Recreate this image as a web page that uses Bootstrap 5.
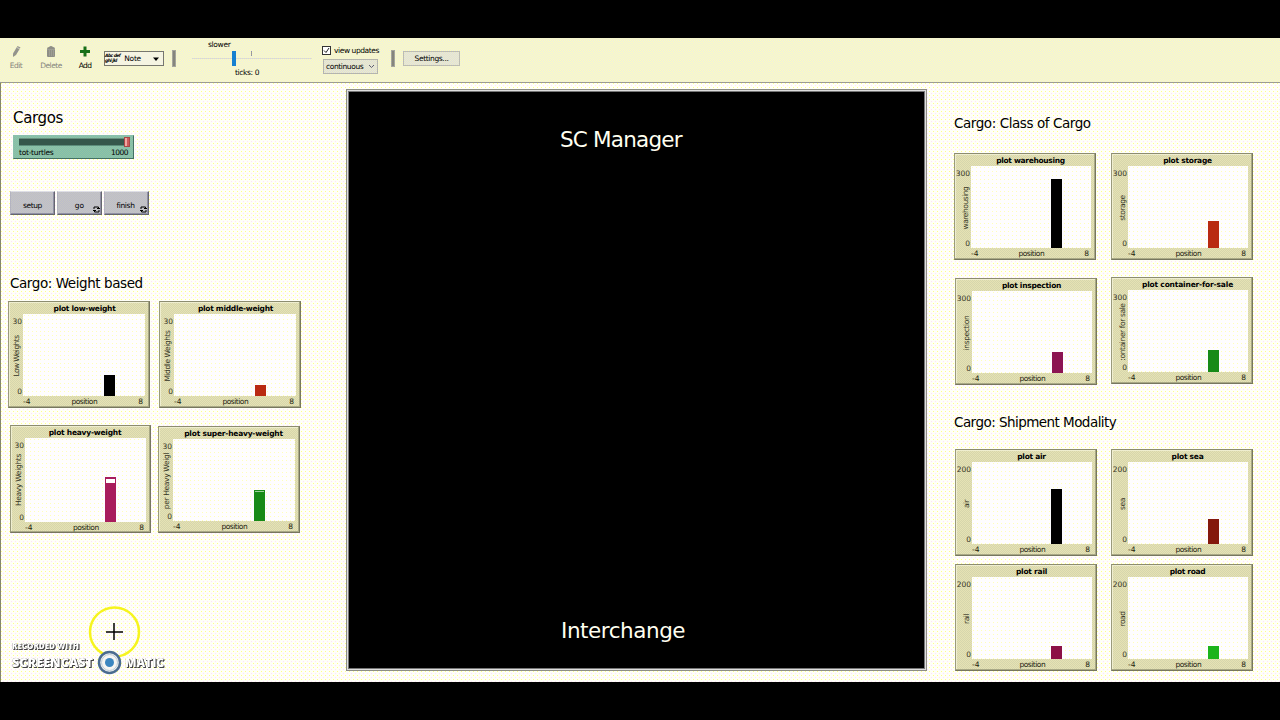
<!DOCTYPE html>
<html lang="en">
<head>
<meta charset="utf-8">
<meta name="viewport" content="width=device-width, initial-scale=1">
<title>Cargo model</title>
<link href="https://cdn.jsdelivr.net/npm/bootstrap@5.3.0/dist/css/bootstrap.min.css" rel="stylesheet">
<style>
body{width:1280px;height:720px;overflow:hidden;background:#000;font-family:"DejaVu Sans",sans-serif;color:#000;font-size:7.5px;line-height:10px}
.fit{white-space:pre;display:inline-block}
.app{height:644px;margin-top:38px;background:#fefdfe}
/* two-tone dither: --a base, --b second tone */
.dith,.plot,.nbtn,.slider,.bar-top{background:
 conic-gradient(at 1px 1px,transparent 75%,var(--b) 0) 0 0/2px 2px,
 conic-gradient(at 1px 1px,transparent 75%,var(--b) 0) 1px 1px/2px 2px,var(--a)}
/* toolbar */
.bar-top{height:45px;border-bottom:1px solid #9b9b94;--a:#ebebe4;--b:#ffffba}
.tool{text-align:center;height:30px;margin-top:7px}
.tool svg{display:block;margin:0 auto 3px}
.muted{color:#85857c}
.note{width:60px;height:15px;margin-top:13px;border:1px solid #77776e;background:#f5f4e2}
.tiny{font-size:4.5px;line-height:4.5px;font-weight:bold;font-style:italic}
.sep{width:4px;height:17px;margin-top:12px;background:#85857d;border:1px solid #a5a59c}
.speed{width:120px;height:45px;position:relative}
.speed i{position:absolute}
.cb{width:9px;height:9px;border:1px solid #333;background:#fff}
.combo{width:55px;height:15px;border:1px solid #b5b5ad;--a:#dcdcdc;--b:#eeeec8}
.setbtn{width:57px;height:15px;margin-top:13px;border:1px solid #bcbcb2;--a:#dedede;--b:#eeeec8}
/* canvas */
.work{height:599px;border-left:1px solid #85856f;background:
 conic-gradient(at 1px 1px,transparent 75%,#ffff88 0) 0 0/4px 4px,
 conic-gradient(at 1px 1px,transparent 75%,#ffe0fa 0) 2px 2px/4px 4px,#fffff8}
.left-col{width:345px;padding-left:7px}
.view{width:581px;height:582px;margin-top:6px;border:1px solid #8e8e86;padding:1px;background:#dedede}
.view>div{border:1px solid #777;background:#000;color:#fffff0;height:100%}
.view span{font-size:21.5px;line-height:28px}
.right-col{width:350px;padding-left:27px}
.h1t{font-size:15px;line-height:20px}
.h2t{font-size:13.5px;line-height:18px}
.slider{width:121px;height:24px;border:1px solid;border-color:#8bbfae #447163 #447163 #8bbfae;--a:#7fbdaf;--b:#94c4a0;padding:2px 4px 0 5px}
.track{height:8px;background:#35574b;border-top:1px solid #69917f;border-bottom:1px solid #5c8d7b}
.knob{width:6px;height:10px;margin:-2px -1px 0 0;background:linear-gradient(90deg,#f0a7a2 0 40%,#cf5a5a 40%);border:1px solid #a94848}
.nbtn{width:45px;height:24px;margin-right:2px;padding-top:5px;border:1px solid;border-color:#dedee6 #66666f #66666f #b4b4c0;box-shadow:inset -1px -1px #9090a4;--a:#bcbccc;--b:#c6c6c0;position:relative}
.nbtn svg{position:absolute;right:1px;bottom:1px}
/* plot widget */
.plot{width:142px;height:107px;flex:none;border:1px solid;border-color:#8c8c70 #77775f #77775f #9a9a7c;box-shadow:inset -1px -1px #a9a986,inset 1px 1px #efeed0;
 --a:#d6d6ac;--b:#e6e2b4;
 display:grid;grid-template:12px 82px 11px/14px 122px 4px}
.plot>b{grid-column:1/4;text-align:center;line-height:13px;padding-left:11px}
.ya{position:relative;color:#33331f}
.ya>span{position:absolute;right:1px}
.ya>span:first-child{top:3px}.ya>span:nth-child(2){bottom:-1px}
.ya>em{position:absolute;font-style:normal;left:-32px;top:37px;width:80px;height:10px;display:flex;justify-content:center;transform:rotate(-90deg)}
.area{position:relative;background:conic-gradient(at 1px 1px,transparent 75%,#ffffb8 0) 1px 1px/4px 4px,#fefdfe}
.area i{position:absolute;bottom:0;left:81px;width:11px;background:var(--c);height:var(--h)}
.xa{grid-column:2/4;color:#22220f;padding:1px 6px 0 0;display:flex;justify-content:space-between;line-height:10px}
.tall{height:108px}
.right-col .plot{grid-template-columns:16px 120px 4px}
.right-col .area i{left:80px}
.right-col .ya>em{left:-29px}
.right-col .xa{padding-right:6px}
.right-col .modal-row .plot:first-child .area i{left:79px}
/* recorder mark and pointer */
.rec{position:absolute;left:0;bottom:0;width:180px;height:85px}
</style>
</head>
<body>
<div class="app position-relative">
 <header class="bar-top d-flex">
  <div class="tool muted" style="margin-left:6px;width:20px"><svg width="12" height="13" viewBox="0 0 12 13"><path d="M3 8.500 7.500 1 10.500 2.500 6 10 3 12z" fill="#94948c"/><path d="m7 2.500 3 1.500" stroke="#dcdccc" stroke-width=".8"/></svg><span class="fit" data-w="13">Edit</span></div>
  <div class="tool muted" style="margin-left:13px;width:24px"><svg width="12" height="13" viewBox="0 0 12 13"><path d="M2 4q0-2 2-2 2-2 4 0 2 0 2 2v7q0 1-1 1H3q-1 0-1-1z" fill="#8e8e86"/><path d="M4.500 5v6M6.500 5v6M8.500 5v6M2 4.500h8" stroke="#a9a99f" stroke-width=".6"/></svg><span class="fit" data-w="22">Delete</span></div>
  <div class="tool" style="margin-left:11px;width:22px"><svg width="12" height="13" viewBox="0 0 12 13"><path d="M4.500 1.500h3v3.500h3.500v3H7.500v3.500h-3V8H1V5h3.500z" fill="#187018"/></svg><span class="fit" data-w="13">Add</span></div>
  <div class="note d-flex align-items-center" style="margin-left:8px"><span class="tiny ps-0"><span class="fit" data-w="15">Abc def</span><br><span class="fit" data-w="12">ghi jkl</span></span><span class="fit" data-w="17" style="margin-left:4px">Note</span><svg class="ms-auto me-1" width="6" height="4"><path d="M0 .500h6L3 4z"/></svg></div>
  <div class="sep" style="margin-left:8px"></div>
  <div class="speed" style="margin-left:16px"><span class="fit position-absolute" data-w="22" style="left:16px;top:2px">slower</span><i style="left:0;top:20px;width:120px;height:1px;background:#dcdcd2"></i><i style="left:59px;top:13px;width:1px;height:5px;background:#999"></i><i style="left:40px;top:13px;width:4px;height:15px;background:#1680d0"></i><span class="fit position-absolute" data-w="24" style="left:43px;top:30px">ticks: 0</span></div>
  <div style="margin-left:10px;padding-top:8px"><div class="d-flex" style="height:13px"><svg class="cb" viewBox="0 0 7 7"><path d="m1 3.500 2 2 3-4.500" fill="none" stroke="#222"/></svg><span class="fit" data-w="45" style="margin-left:3px">view updates</span></div>
   <div class="combo dith d-flex align-items-center" style="margin-left:1px"><span class="fit" data-w="37" style="margin-left:2px">continuous</span><svg style="margin-left:5px" width="7" height="5"><path d="m1 1 2.500 2.500L6 1" fill="none" stroke="#666"/></svg></div></div>
  <div class="sep" style="margin-left:12px"></div>
  <div class="setbtn dith text-center" style="margin-left:8px;line-height:13px"><span class="fit" data-w="34">Settings...</span></div>
 </header>
 <main class="work d-flex">
  <section class="left-col">
   <div class="h1t" style="padding:25px 0 0 5px"><span class="fit" data-w="50">Cargos</span></div>
   <div class="slider" style="margin:7px 0 0 5px"><div class="track d-flex justify-content-end"><div class="knob"></div></div><div class="d-flex justify-content-between" style="padding:2px 1px 0 0;line-height:9px"><span class="fit" data-w="35">tot-turtles</span><span class="fit" data-w="17">1000</span></div></div>
   <div class="d-flex" style="margin:32px 0 0 2px">
    <div class="nbtn d-flex align-items-center justify-content-center"><span class="fit" data-w="19">setup</span></div>
    <div class="nbtn d-flex align-items-center justify-content-center"><span class="fit" data-w="9">go</span><svg width="7" height="7" viewBox="0 0 7 7"><path d="M1 3V1h4.500v1.500M6 4v2H1.500V4.500M4 2.500h3M0 4.500h3" fill="none" stroke="#000"/></svg></div>
    <div class="nbtn d-flex align-items-center justify-content-center"><span class="fit" data-w="18" style="margin-right:2px">finish</span><svg width="7" height="7" viewBox="0 0 7 7"><path d="M1 3V1h4.500v1.500M6 4v2H1.500V4.500M4 2.500h3M0 4.500h3" fill="none" stroke="#000"/></svg></div>
   </div>
   <div class="h2t" style="margin:59px 0 0 2px"><span class="fit" data-w="133">Cargo: Weight based</span></div>
   <div class="d-flex" style="margin-top:9px;gap:9px">
    <div class="plot"><b><span class="fit" data-w="62">plot low-weight</span></b><div class="ya"><span>30</span><span>0</span><em><span class="fit" data-w="41">Low Weights</span></em></div><div class="area"><i style="--c:#000;--h:21px"></i></div><div class="xa"><span>-4</span><span class="fit" data-w="26">position</span><span>8</span></div></div>
    <div class="plot"><b><span class="fit" data-w="75">plot middle-weight</span></b><div class="ya"><span>30</span><span>0</span><em><span class="fit" data-w="51">Middle Weights</span></em></div><div class="area"><i style="--c:#b92a12;--h:11px"></i></div><div class="xa"><span>-4</span><span class="fit" data-w="26">position</span><span>8</span></div></div>
   </div>
   <div class="d-flex" style="margin:17px 0 0 2px;gap:7px">
    <div class="plot tall" style="width:141px;grid-template:12px 84px 10px/14px 121px 4px"><b style="padding-left:9px"><span class="fit" data-w="73">plot heavy-weight</span></b><div class="ya"><span>30</span><span>0</span><em><span class="fit" data-w="52">Heavy Weights</span></em></div><div class="area"><i style="left:80px;--c:linear-gradient(#fff,#fff) 1px 2px/9px 4px no-repeat,#a81c5c;--h:45px"></i></div><div class="xa"><span>-4</span><span class="fit" data-w="26">position</span><span>8</span></div></div>
    <div class="plot" style="margin-top:1px"><b style="padding-left:9px"><span class="fit" data-w="99">plot super-heavy-weight</span></b><div class="ya"><span>30</span><span>0</span><em><span class="fit" data-w="56">per Heavy Weigl</span></em></div><div class="area"><i style="--c:linear-gradient(#9fd09f,#9fd09f) 1px 1px/9px 1px no-repeat,#178a17;--h:31px"></i></div><div class="xa"><span>-4</span><span class="fit" data-w="26">position</span><span>8</span></div></div>
   </div>
  </section>
  <section class="view"><div class="d-flex flex-column justify-content-between" style="padding:34px 0 23px 211px"><span><span class="fit" data-w="122">SC Manager</span></span><span><span class="fit" data-w="124" style="margin-left:1px">Interchange</span></span></div></section>
  <section class="right-col">
   <div class="h2t" style="margin-top:31px"><span class="fit" data-w="137">Cargo: Class of Cargo</span></div>
   <div class="d-flex" style="margin-top:21px;gap:15px">
    <div class="plot"><b><span class="fit" data-w="69">plot warehousing</span></b><div class="ya"><span>300</span><span>0</span><em><span class="fit" data-w="43">warehousing</span></em></div><div class="area"><i style="--c:#000;--h:69px"></i></div><div class="xa"><span>-4</span><span class="fit" data-w="26">position</span><span>8</span></div></div>
    <div class="plot"><b><span class="fit" data-w="49">plot storage</span></b><div class="ya"><span>300</span><span>0</span><em><span class="fit" data-w="26">storage</span></em></div><div class="area"><i style="--c:#b92a12;--h:27px"></i></div><div class="xa"><span>-4</span><span class="fit" data-w="26">position</span><span>8</span></div></div>
   </div>
   <div class="d-flex" style="margin:17px 0 0 1px;gap:14px">
    <div class="plot" style="margin-top:1px"><b><span class="fit" data-w="59">plot inspection</span></b><div class="ya"><span>300</span><span>0</span><em><span class="fit" data-w="35">inspection</span></em></div><div class="area"><i style="--c:#8c1452;--h:21px"></i></div><div class="xa"><span>-4</span><span class="fit" data-w="26">position</span><span>8</span></div></div>
    <div class="plot"><b><span class="fit" data-w="91">plot container-for-sale</span></b><div class="ya"><span>300</span><span>0</span><em><span class="fit" data-w="57">:ontainer for sale</span></em></div><div class="area"><i style="--c:#178a17;--h:22px"></i></div><div class="xa"><span>-4</span><span class="fit" data-w="26">position</span><span>8</span></div></div>
   </div>
   <div class="h2t" style="margin-top:28px"><span class="fit" data-w="162">Cargo: Shipment Modality</span></div>
   <div class="d-flex modal-row" style="margin:18px 0 0 1px;gap:14px">
    <div class="plot"><b><span class="fit" data-w="29">plot air</span></b><div class="ya"><span>200</span><span>0</span><em><span class="fit" data-w="8">air</span></em></div><div class="area"><i style="--c:#000;--h:55px"></i></div><div class="xa"><span>-4</span><span class="fit" data-w="26">position</span><span>8</span></div></div>
    <div class="plot"><b><span class="fit" data-w="32">plot sea</span></b><div class="ya"><span>200</span><span>0</span><em><span class="fit" data-w="12">sea</span></em></div><div class="area"><i style="--c:#84180c;--h:25px"></i></div><div class="xa"><span>-4</span><span class="fit" data-w="26">position</span><span>8</span></div></div>
   </div>
   <div class="d-flex modal-row" style="margin:8px 0 0 1px;gap:14px">
    <div class="plot"><b><span class="fit" data-w="31">plot rail</span></b><div class="ya"><span>200</span><span>0</span><em><span class="fit" data-w="10">rail</span></em></div><div class="area"><i style="--c:#8c1046;--h:13px"></i></div><div class="xa"><span>-4</span><span class="fit" data-w="26">position</span><span>8</span></div></div>
    <div class="plot"><b><span class="fit" data-w="36">plot road</span></b><div class="ya"><span>200</span><span>0</span><em><span class="fit" data-w="15">road</span></em></div><div class="area"><i style="--c:#1cb41c;--h:13px"></i></div><div class="xa"><span>-4</span><span class="fit" data-w="26">position</span><span>8</span></div></div>
   </div>
  </section>
 </main>
 <svg class="rec" viewBox="0 597 180 85" font-family="Open Sans, sans-serif" font-weight="800">
  <circle cx="114.500" cy="632" r="24.500" fill="none" stroke="#f6f41e" stroke-width="2.500"/>
  <path d="M106 632h17M114 623v17" stroke="#000" stroke-width="1.500"/>
  <g fill="#fff" style="filter:drop-shadow(1px 1px 0 #444) drop-shadow(0 0 .5px #555)">
   <text x="12" y="648.500" font-size="8" textLength="67" lengthAdjust="spacingAndGlyphs">RECORDED WITH</text>
   <text x="12" y="667" font-size="13" textLength="81" lengthAdjust="spacingAndGlyphs">SCREENCAST</text>
   <text x="125" y="667" font-size="13" textLength="39" lengthAdjust="spacingAndGlyphs">MATIC</text>
  </g>
  <circle cx="109.500" cy="662.500" r="10.500" fill="#f5f5f2" stroke="#4a6c90" stroke-width="2.500"/>
  <circle cx="109.500" cy="662.500" r="8" fill="none" stroke="#b9cbd8"/>
  <circle cx="109.500" cy="662.500" r="4.500" fill="#3b86c0"/>
 </svg>
</div>
<script src="https://cdn.jsdelivr.net/npm/bootstrap@5.3.0/dist/js/bootstrap.bundle.min.js"></script>
<script>
// Set each label to its nominal width by tracking.
document.querySelectorAll('.fit').forEach(function(e){
  var n=e.textContent.length,w=+e.dataset.w,s=(w-e.offsetWidth)/n;
  e.style.letterSpacing=s.toFixed(3)+'px';
});
</script>
</body>
</html>
